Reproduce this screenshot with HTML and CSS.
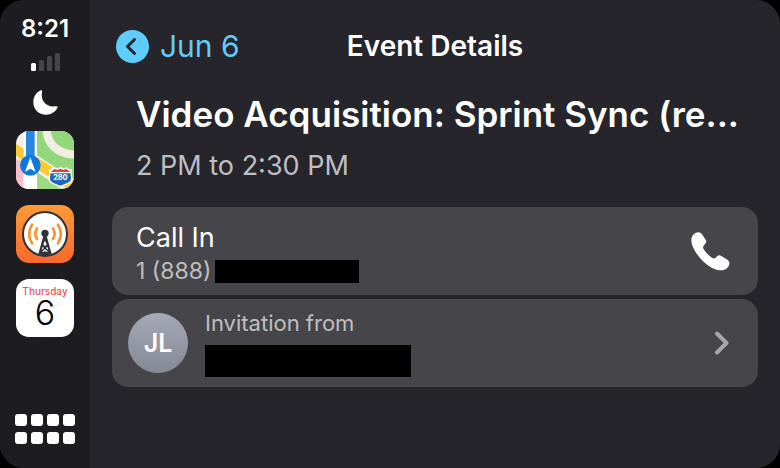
FILE: index.html
```html
<!DOCTYPE html>
<html lang="en">
<head>
<meta charset="utf-8">
<title>Event Details</title>
<link rel="stylesheet" href="styles.css">
</head>
<body>
<div class="screen">
  <aside class="sidebar">
    <time class="clock">8:21</time>
    <svg class="signal" viewBox="0 0 30 20" aria-hidden="true">
      <rect x="1" y="11" width="5" height="8" rx="1.500" fill="#fff"/>
      <g fill="#45454a">
        <rect x="9" y="8" width="5" height="11" rx="1.500"/>
        <rect x="17" y="4" width="5" height="15" rx="1.500"/>
        <rect x="25" y="1" width="5" height="18" rx="1.500"/>
      </g>
    </svg>
    <svg class="moon" viewBox="98 269 74 74" aria-hidden="true">
      <path d="M122 270Q126 269 125 274C119 300 137 321 166 317Q172 316 171 320C166 333 152 342 137 342C115 342 99 326 99 305C99 289 108 275 122 270Z" fill="#fff"/>
    </svg>
    <nav class="apps">
      <a class="app maps" href="#" aria-label="Maps">
        <svg viewBox="24 21 174 174" aria-hidden="true">
          <rect x="24" y="21" width="174" height="174" fill="#f2efe6"/>
          <path d="M87 21H198V170L87 94Z" fill="#93d77c"/>
          <path d="M116 14C116 60 150 92 204 92" fill="none" stroke="#f0ede3" stroke-width="25"/>
          <path d="M87 145L160 195H87Z" fill="#9cda83"/>
          <path d="M16 72L206 194" stroke="#f3f0e6" stroke-width="38"/>
          <path d="M16 72L206 194" stroke="#fbc935" stroke-width="30"/>
          <path d="M24 104L46 117V195H24Z" fill="#f8bfcb"/>
          <path d="M47 21H87V195H47Z" fill="#fff"/>
          <path d="M54 21H80V125H54Z" fill="#2786e2"/>
          <circle cx="67" cy="124" r="31" fill="#0b7ae0"/>
          <path d="M67 100L83 144L67 134L51 144Z" fill="#fff"/>
          <path d="M122 137Q132 136 138 130Q148 135 157 129Q167 135 176 130Q182 136 192 137Q189 147 192 155Q197 173 181 180L157 189L133 180Q118 173 122 155Q126 147 122 137Z" fill="#fff"/>
          <path d="M128 144L139 135Q149 140 157 134Q166 140 175 135L187 144Z" fill="#df3f3d"/>
          <path d="M127 148H188Q187 153 189 159Q191 172 178 177L157 185L136 177Q124 172 126 159Q128 153 127 148Z" fill="#2467b4"/>
          <text class="route" x="157" y="169" text-anchor="middle">280</text>
        </svg>
      </a>
      <a class="app overcast" href="#" aria-label="Podcasts">
        <svg viewBox="24 21 174 174" aria-hidden="true">
          <defs><linearGradient id="orange" x1="0" y1="0" x2="0" y2="1"><stop stop-color="#ff9b36"/><stop offset="1" stop-color="#f9682d"/></linearGradient></defs>
          <rect x="24" y="21" width="174" height="174" fill="url(#orange)"/>
          <circle cx="111" cy="108" r="66" fill="#fff" stroke="#2d333c" stroke-width="6"/>
          <g fill="none" stroke="#f69431" stroke-width="8" stroke-linecap="round">
            <path d="M87 91Q77 107 87 123M72 80Q55 107 72 136M135 91Q145 107 135 123M150 80Q167 107 150 136"/>
          </g>
          <circle cx="111" cy="106" r="11" fill="#2d333c"/>
          <path d="M107 110H115L131 168Q111 176 91 168Z" fill="#2d333c"/>
          <path d="M111 128L116 139L111 145L106 139ZM104 146L108 150L101 157ZM118 146L121 157L114 150ZM111 153L121 163L111 160L101 163Z" fill="#fff"/>
        </svg>
      </a>
      <a class="app calendar" href="#">
        <span class="weekday">Thursday</span>
        <span class="date">6</span>
      </a>
    </nav>
    <button class="dashboard" type="button" aria-label="All apps">
      <i></i><i></i><i></i><i></i><i></i><i></i><i></i><i></i>
    </button>
  </aside>
  <main class="content">
    <header class="bar">
      <button class="back" type="button">
        <svg viewBox="0 0 33 33" aria-hidden="true">
          <circle cx="16.500" cy="16.500" r="16.500" fill="#5fcdfc"/>
          <path d="M18.500 9.500L11.500 16.500L18.500 23.500" fill="none" stroke="#25252b" stroke-width="3" stroke-linecap="round" stroke-linejoin="round"/>
        </svg>
        <span>Jun 6</span>
      </button>
      <h1 class="bar-title">Event Details</h1>
    </header>
    <section class="summary">
      <h2 class="event">Video Acquisition: Sprint Sync (re...</h2>
      <p class="when">2 PM to 2:30 PM</p>
    </section>
    <div class="cards">
      <button class="card call" type="button">
        <span class="lines">
          <span class="label">Call In</span>
          <span class="detail">1 (888)<span class="mask number"></span></span>
        </span>
        <svg class="phone" viewBox="92 110 117 117" aria-hidden="true">
          <path d="M93 135C93 120 104 111 114 111C119 111 122 113 125 117L136 133C139 138 138 142 134 146L130 151C127 154 128 158 131 163C138 173 147 182 156 188C160 190 163 190 166 187L171 182C174 179 179 179 183 182L201 193C206 197 208 200 207 206C205 217 196 225 183 225C165 225 141 213 121 190C103 170 93 150 93 135Z" fill="#fff"/>
        </svg>
      </button>
      <button class="card invite" type="button">
        <span class="avatar">JL</span>
        <span class="lines">
          <span class="detail">Invitation from</span>
          <span class="mask name"></span>
        </span>
        <svg class="chevron" viewBox="0 0 16 24" aria-hidden="true">
          <path d="M3 2.500L12.500 12L3 21.500" fill="none" stroke="#a6a6a9" stroke-width="4" stroke-linecap="round" stroke-linejoin="round"/>
        </svg>
      </button>
    </div>
  </main>
</div>
</body>
</html>
```
FILE: styles.css
```css
* { box-sizing: border-box; }
body { margin: 0; background: #000; font-family: Inter, "Liberation Sans", sans-serif; color: #fff; }
button { margin: 0; padding: 0; border: 0; background: none; color: inherit; font: inherit; text-align: left; }
a { color: inherit; text-decoration: none; }
h1, h2, p { margin: 0; }
svg { display: block; }

.screen { display: flex; min-height: 100vh; border-radius: 24px; overflow: hidden; background: #25252b; }

.sidebar { flex: none; width: 90px; display: flex; flex-direction: column; align-items: center; padding: 15px 0 24px; background: #1c1c21; }
.clock { font-size: 24px; line-height: 28px; font-weight: 600; }
.signal { width: 30px; height: 20px; margin-top: 9px; }
.moon { width: 25px; height: 25px; margin: 18px 0 16px; }
.apps { display: grid; gap: 16px; }
.app { width: 58px; height: 58px; border-radius: 13px; overflow: hidden; }
.route { font-size: 22px; font-weight: 700; fill: #fff; }
.calendar { display: flex; flex-direction: column; align-items: center; padding-top: 6px; background: #fff; color: #000; }
.weekday { font-size: 10px; line-height: 12px; font-weight: 500; color: #e9534f; }
.date { font-size: 34px; line-height: 32px; font-weight: 300; }
.dashboard { display: grid; grid-template-columns: repeat(4, 12px); gap: 6px 4px; margin-top: auto; }
.dashboard i { height: 12px; border-radius: 3px; background: #fff; }

.content { flex: 1; min-width: 0; padding: 24px 22px; }
.bar { display: grid; grid-template-columns: 1fr auto 1fr; align-items: center; height: 42px; padding: 0 4px; }
.back { display: flex; align-items: center; gap: 11px; font-size: 30px; line-height: 42px; color: #66c9f6; }
.back svg { width: 33px; height: 33px; }
.bar-title { font-size: 28px; line-height: 44px; font-weight: 600; }

.summary { padding: 24px 20px 23px 24px; }
.event { font-size: 35px; line-height: 48px; font-weight: 600; white-space: nowrap; }
.when { margin-top: 9px; font-size: 27px; line-height: 37px; color: #bfbfc3; }

.cards { display: grid; gap: 4px; }
.card { display: flex; align-items: center; width: 100%; height: 88px; border-radius: 16px; background: #464549; }
.call { padding: 6px 28px 0 24px; }
.call .phone { margin-bottom: 6px; }
.invite { gap: 17px; padding: 0 28px 0 16px; }
.lines { flex: 1; display: flex; flex-direction: column; }
.label { font-size: 27px; line-height: 34px; }
.detail { display: flex; align-items: center; gap: 4px; font-size: 23px; line-height: 32px; color: #bfbfc2; }
.invite .detail { font-size: 22px; line-height: 28px; }
.mask { background: #000; }
.number { width: 144px; height: 23px; }
.name { width: 206px; height: 32px; margin-top: 8px; }
.phone { width: 39px; height: 39px; }
.chevron { width: 16px; height: 24px; }
.avatar { display: grid; place-items: center; width: 60px; height: 60px; border-radius: 50%; background: linear-gradient(#a5a9b7, #858994); font-size: 25px; font-weight: 600; }
```
